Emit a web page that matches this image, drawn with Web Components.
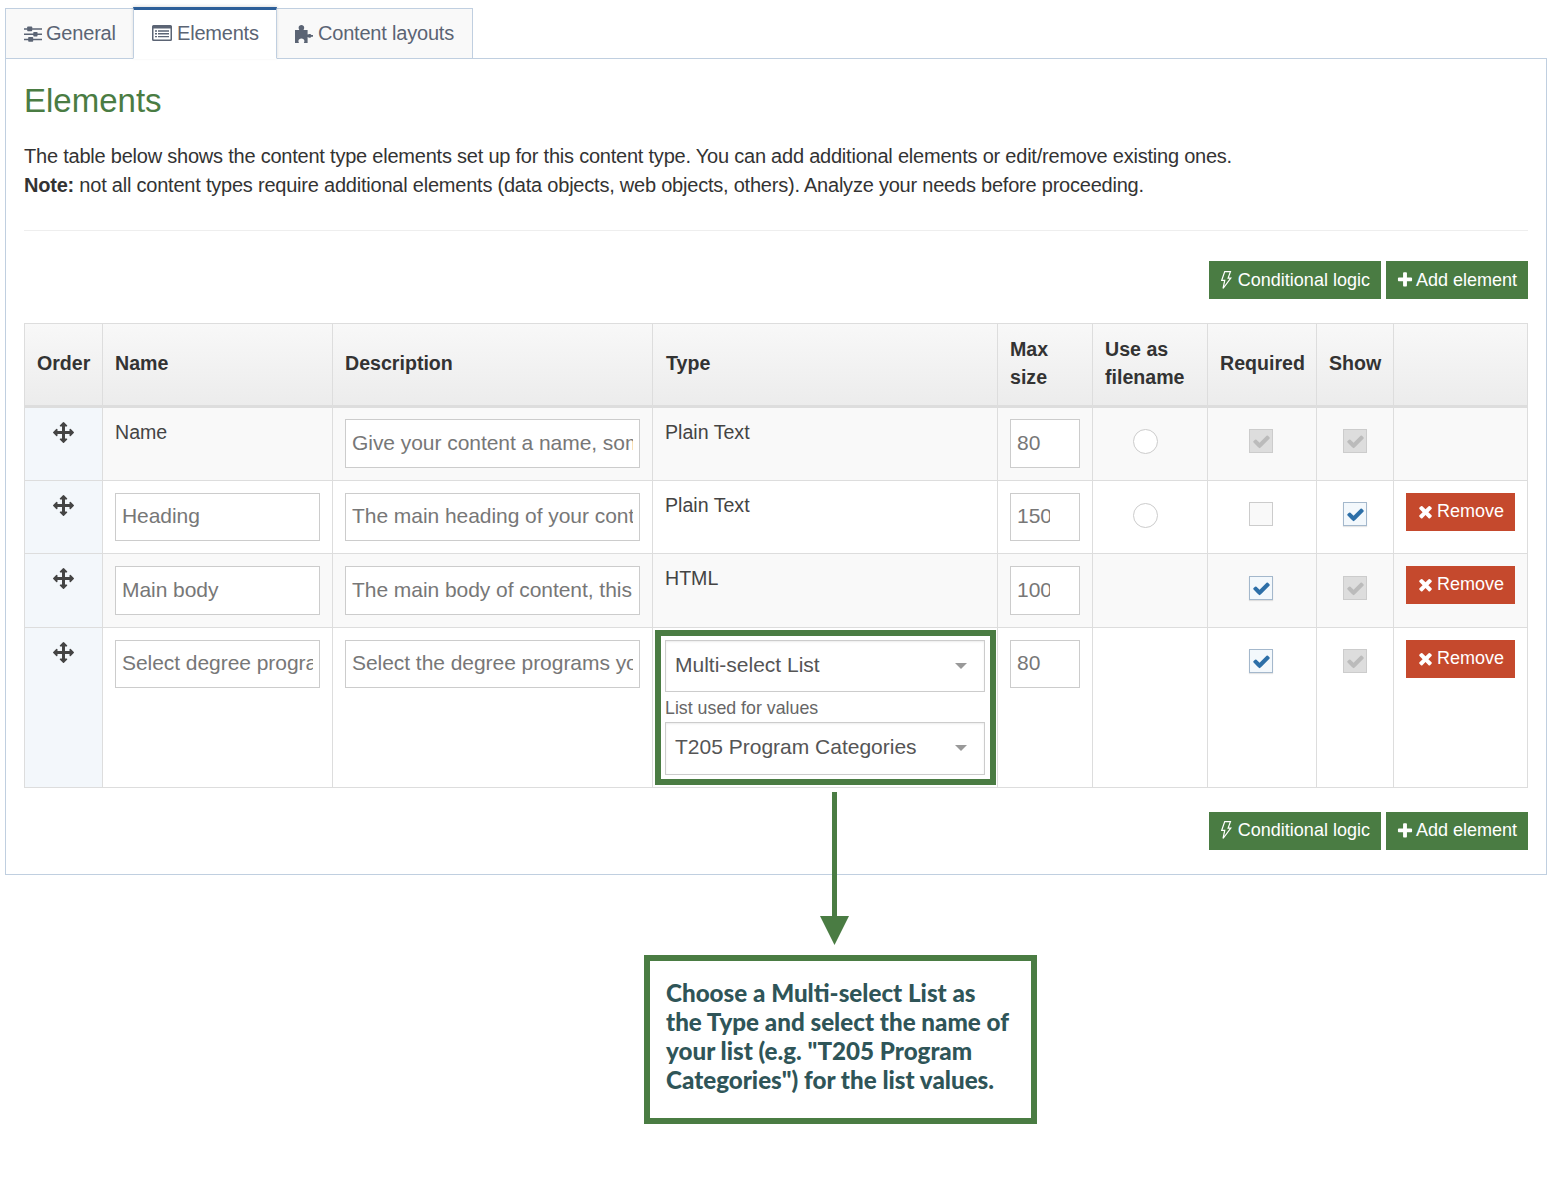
<!DOCTYPE html>
<html lang="en"><head><meta charset="utf-8"><title>Elements</title>
<style>
html,body{margin:0;background:#fff}
body{font-family:"Liberation Sans",Arial,sans-serif;color:#333;font-size:20px}
</style></head><body>
<page-shell>
  <tab-bar>
    <tab-item icon="sliders" w="129">General</tab-item>
    <tab-item icon="list" w="144" active>Elements</tab-item>
    <tab-item icon="puzzle" w="197">Content layouts</tab-item>
  </tab-bar>
  <content-panel heading="Elements">
    <p slot="intro">The table below shows the content type elements set up for this content type. You can add additional elements or edit/remove existing ones.<br><b>Note:</b> not all content types require additional elements (data objects, web objects, others). Analyze your needs before proceeding.</p>
    <action-bar first></action-bar>
    <element-table>
      <table-row head h="84">
        <table-cell>Order</table-cell><table-cell>Name</table-cell><table-cell>Description</table-cell><table-cell nudge>Type</table-cell>
        <table-cell>Max<br>size</table-cell><table-cell>Use as<br>filename</table-cell><table-cell>Required</table-cell><table-cell>Show</table-cell><table-cell></table-cell>
      </table-row>
      <table-row alt h="73">
        <table-cell drag><fa-icon name="move"></fa-icon></table-cell>
        <table-cell plain>Name</table-cell>
        <table-cell up><text-field w="295" h="49">Give your content a name, some</text-field></table-cell>
        <table-cell plain>Plain Text</table-cell>
        <table-cell up><text-field w="70" h="49" clip="39">80</text-field></table-cell>
        <table-cell center radio><radio-mark></radio-mark></table-cell>
        <table-cell center req><check-mark state="disabled"></check-mark></table-cell>
        <table-cell center><check-mark state="disabled"></check-mark></table-cell>
        <table-cell></table-cell>
      </table-row>
      <table-row h="73">
        <table-cell drag><fa-icon name="move"></fa-icon></table-cell>
        <table-cell><text-field w="205">Heading</text-field></table-cell>
        <table-cell><text-field w="295">The main heading of your cont</text-field></table-cell>
        <table-cell plain>Plain Text</table-cell>
        <table-cell><text-field w="70" clip="33">150</text-field></table-cell>
        <table-cell center radio low><radio-mark></radio-mark></table-cell>
        <table-cell center req><check-mark></check-mark></table-cell>
        <table-cell center><check-mark state="on"></check-mark></table-cell>
        <table-cell><remove-button></remove-button></table-cell>
      </table-row>
      <table-row alt h="74">
        <table-cell drag><fa-icon name="move"></fa-icon></table-cell>
        <table-cell><text-field w="205" h="49">Main body</text-field></table-cell>
        <table-cell><text-field w="295" h="49">The main body of content, this</text-field></table-cell>
        <table-cell plain>HTML</table-cell>
        <table-cell><text-field w="70" h="49" clip="33">100</text-field></table-cell>
        <table-cell></table-cell>
        <table-cell center req low><check-mark state="on"></check-mark></table-cell>
        <table-cell center low><check-mark state="disabled"></check-mark></table-cell>
        <table-cell><remove-button></remove-button></table-cell>
      </table-row>
      <table-row h="160">
        <table-cell drag><fa-icon name="move"></fa-icon></table-cell>
        <table-cell><text-field w="205">Select degree progra</text-field></table-cell>
        <table-cell><text-field w="295">Select the degree programs you</text-field></table-cell>
        <table-cell type>
          <select-box>Multi-select List</select-box>
          <field-label>List used for values</field-label>
          <select-box tall>T205 Program Categories</select-box>
          <highlight-frame></highlight-frame>
          <down-arrow></down-arrow>
        </table-cell>
        <table-cell><text-field w="70" clip="39">80</text-field></table-cell>
        <table-cell></table-cell>
        <table-cell center req><check-mark state="on"></check-mark></table-cell>
        <table-cell center><check-mark state="disabled"></check-mark></table-cell>
        <table-cell><remove-button></remove-button></table-cell>
      </table-row>
    </element-table>
    <action-bar slot="after"></action-bar>
  </content-panel>
  <call-out>Choose a Multi-select List as the Type and select the name of your list (e.g. "T205 Program Categories") for the list values.</call-out>
</page-shell>
<script>
const ICONS={
 move:'<svg viewBox="0 0 1792 1792" fill="currentColor"><path d="M1792 896q0 26-19 45l-256 256q-19 19-45 19t-45-19-19-45v-128h-384v384h128q26 0 45 19t19 45-19 45l-256 256q-19 19-45 19t-45-19l-256-256q-19-19-19-45t19-45 45-19h128v-384h-384v128q0 26-19 45t-45 19-45-19l-256-256q-19-19-19-45t19-45l256-256q19-19 45-19t45 19 19 45v128h384v-384h-128q-26 0-45-19t-19-45 19-45l256-256q19-19 45-19t45 19l256 256q19 19 19 45t-19 45-45 19h-128v384h384v-128q0-26 19-45t45-19 45 19l256 256q19 19 19 45z"/></svg>',
 check:'<svg viewBox="0 0 1792 1792" fill="currentColor"><path d="M1671 566q0 40-28 68l-724 724-136 136q-28 28-68 28t-68-28l-136-136-362-362q-28-28-28-68t28-68l136-136q28-28 68-28t68 28l294 295 656-657q28-28 68-28t68 28l136 136q28 28 28 68z"/></svg>',
 times:'<svg viewBox="0 0 1792 1792" fill="currentColor"><path d="M1490 1322q0 40-28 68l-136 136q-28 28-68 28t-68-28l-294-294-294 294q-28 28-68 28t-68-28l-136-136q-28-28-28-68t28-68l294-294-294-294q-28-28-28-68t28-68l136-136q28-28 68-28t68 28l294 294 294-294q28-28 68-28t68 28l136 136q28 28 28 68t-28 68l-294 294 294 294q28 28 28 68z"/></svg>',
 plus:'<svg viewBox="0 0 1792 1792" fill="currentColor"><path d="M1600 736v192q0 40-28 68t-68 28h-416v416q0 40-28 68t-68 28h-192q-40 0-68-28t-28-68v-416h-416q-40 0-68-28t-28-68v-192q0-40 28-68t68-28h416v-416q0-40 28-68t68-28h192q40 0 68 28t28 68v416h416q40 0 68 28t28 68z"/></svg>',
 bolt:'<svg viewBox="0 0 31 55" fill="none" stroke="currentColor" stroke-width="3.6" stroke-linejoin="miter"><path d="M11 2h17l-7 19h8L6 52l5-24H2z"/></svg>',
 sliders:'<svg viewBox="0 0 18 16" fill="currentColor"><path d="M0 2.300h18v1.400H0zM0 7.600h18v1.400H0zM0 12.800h18v1.400H0z"/><rect x="3.200" y="0.600" width="5" height="4.600" rx=".7"/><rect x="9.300" y="5.900" width="4.200" height="4.600" rx=".7"/><rect x="4.200" y="11.100" width="5" height="4.600" rx=".7"/></svg>',
 list:'<svg viewBox="0 0 20 16" fill="currentColor"><path fill-rule="evenodd" d="M1.500 0h17A1.500 1.500 0 0 1 20 1.500v13a1.500 1.500 0 0 1-1.500 1.500h-17A1.500 1.500 0 0 1 0 14.500v-13A1.500 1.500 0 0 1 1.500 0zM1.500 3.600v10.600q0 .4.4.4h16.200q.4 0 .4-.4V3.600z"/><path d="M3 5.300h2v1.400H3zM6 5.300h11v1.400H6zM3 8.100h2v1.400H3zM6 8.100h11v1.400H6zM3 10.900h2v1.400H3zM6 10.900h11v1.400H6z"/></svg>',
 puzzle:'<svg viewBox="0 0 18 18" fill="currentColor"><path d="M0 5h4.300C3.800 4.100 3.600 3.400 3.600 2.700 3.600 1 5 0 6.400 0s2.800 1 2.800 2.700c0 .7-.2 1.400-.7 2.300h4.100v4.600c.7-.5 1.200-.7 1.900-.7 1 0 1.600.5 1.900 1h1.600v1.800h-1.600c-.3.500-.9 1-1.900 1-.7 0-1.200-.2-1.900-.7V18H8.800c.4-.8.6-1.400.6-2 0-1.500-1.300-2.500-3-2.500s-3 1-3 2.500c0 .6.2 1.200.6 2H0z"/></svg>'
};
const GREEN='#4a7c43';
function def(name,css,html,extra){
  customElements.define(name,class extends HTMLElement{
    constructor(){super();this.attachShadow({mode:'open'});}
    connectedCallback(){
      const h=typeof html==='function'?html(this):html;
      this.shadowRoot.innerHTML='<style>'+css+'</style>'+h;
      if(extra)extra(this);
    }
  });
}
def('fa-icon',':host{display:flex;line-height:0;flex:none}svg{width:var(--icon-w,22px);height:var(--icon-h,22px);display:block}',
  el=>ICONS[el.getAttribute('name')]);
def('page-shell',':host{display:block;height:1200px;box-sizing:border-box;padding:7px 5px 0;position:relative}','<slot></slot>');
def('tab-bar',':host{display:flex;align-items:flex-end;height:52px;position:relative;z-index:1;margin-bottom:-1px}','<slot></slot>');
def('tab-item',`:host{display:flex;align-items:center;box-sizing:border-box;height:51px;padding:0 0 0 18px;gap:4px;color:#5b6474;font-size:20px;letter-spacing:-.2px;background:#f9f9f9;border:1px solid #c0cfe0;margin-left:-1px}
:host(:first-child){margin-left:0}
:host([active]){background:#fff;border-top:3px solid #2d5f99;border-bottom-color:#fff;height:52px;padding-bottom:2px;gap:5px;box-shadow:0 -1px 3px rgba(0,0,0,.12);position:relative;z-index:1}
:host([icon=sliders]) fa-icon{--icon-w:18px;--icon-h:16px;margin-top:1px}
:host([icon=list]) fa-icon{--icon-w:20px;--icon-h:16px}
:host([icon=puzzle]){gap:5px}
:host([icon=puzzle]) fa-icon{--icon-w:18px;--icon-h:18px}`,
  el=>{el.style.width=el.getAttribute('w')+'px';return `<fa-icon name="${el.getAttribute('icon')}"></fa-icon><slot></slot>`;});
def('content-panel',`:host{display:block;box-sizing:border-box;height:817px;border:1px solid #c0cfe0;padding:0 18px;background:#fff}
h1{margin:0;font:400 33px/38px "Liberation Sans",Arial,sans-serif;color:${GREEN};padding-top:23px}
.intro{margin-top:22px;font-size:20px;line-height:29px;letter-spacing:-.22px;color:#333;padding-bottom:30px;border-bottom:1px solid #eee}
::slotted(p){margin:0}
.tools{margin-top:30px}.after{margin-top:24px}`,
  el=>`<h1>${el.getAttribute('heading')}</h1><div class="intro"><slot name="intro"></slot></div><div class="tools" id="t"></div><slot></slot><div class="after"><slot name="after"></slot></div>`,
  el=>{const first=el.querySelector('action-bar:not([slot])');el.shadowRoot.getElementById('t').appendChild(first);});
def('action-bar',`:host{display:flex;justify-content:flex-end;gap:5px}
a{display:flex;align-items:center;height:38px;box-sizing:border-box;padding:0 11px 1px;background:${GREEN};color:#fff;font-size:18px}
:host([first]) a{padding-bottom:0}
.c{padding-left:12px;gap:6px}.p{gap:2px}
.c fa-icon{--icon-w:10.500px;--icon-h:18.500px}.p fa-icon{--icon-w:18px;--icon-h:18px;margin-left:-1px}`,
  `<a class="c"><fa-icon name="bolt"></fa-icon>Conditional logic</a><a class="p"><fa-icon name="plus"></fa-icon>Add element</a>`);
def('element-table',':host{display:block;margin-top:24px;border-top:1px solid #ddd;border-left:1px solid #ddd;border-right:1px solid #ddd;box-sizing:border-box;width:1504px}','<slot></slot>');
def('table-row',`:host{display:grid;grid-template-columns:78px 230px 320px 345px 95px 115px 109px 77px 134px;box-sizing:border-box;border-bottom:1px solid #ddd;background:#fff;font-size:19.600px}
:host([alt]){background:#f9f9f9}
:host([head]){background:linear-gradient(#f8f8f8,#ececec);border-bottom:3px solid #ddd;font-weight:700}`,
  el=>{el.style.height=el.getAttribute('h')+'px';return '<slot></slot>';});
def('table-cell',`:host{display:block;box-sizing:border-box;padding:12px;border-right:1px solid #ddd;color:#333;line-height:28px;min-width:0;position:relative}
:host(:last-child){border-right:0}
:host-context(table-row[head]){display:flex;flex-direction:column;justify-content:center;align-items:flex-start;padding-top:0;padding-bottom:4px}
:host([nudge]){padding-left:13px}
:host([up]){padding-top:11px}
:host([plain]){padding-top:11px;line-height:26px;color:#444}
:host([drag]){display:flex;justify-content:center;background:#f3f7fb;padding:14px 0 0 0;color:#444;--icon-w:21px;--icon-h:21px}
:host([center]){display:flex;justify-content:center;padding-top:21px}
:host([radio]){padding-right:22px}
:host([req]){padding-left:11px;padding-right:13px}
:host([low]){padding-top:22px}
:host([type]){padding:12px 12px 0}`,'<slot></slot>');
def('text-field',`:host{display:flex;box-sizing:border-box;height:48px;border:1px solid #ccc;background:#fff;padding:0 6px 2px;align-items:center;color:#777;font-size:21px;font-weight:400;letter-spacing:-.05px}
span{display:block;overflow:hidden;white-space:nowrap;width:100%}`,
  el=>{el.style.width=el.getAttribute('w')+'px';if(el.hasAttribute('h'))el.style.height=el.getAttribute('h')+'px';const c=el.getAttribute('clip');return `<span${c?` style="width:${c}px"`:''}><slot></slot></span>`;});
def('check-mark',`:host{display:flex;align-items:center;justify-content:center;box-sizing:border-box;width:24px;height:24px;border:1px solid #ccc;background:#f9f9f9;color:#2d6fa8}
:host([state=on]){border-color:#a4b8cc;background:#f3f8fc;box-shadow:0 1px 1px rgba(0,0,0,.1)}
:host([state=disabled]){background:#ddd;border-color:#ccc;color:#bbb}
fa-icon{--icon-w:19px;--icon-h:19px}`,
  el=>el.getAttribute('state')?'<fa-icon name="check"></fa-icon>':'');
def('radio-mark',':host{display:block;box-sizing:border-box;width:25px;height:25px;border:1px solid #ccc;border-radius:50%;background:#fff}','');
def('remove-button',`:host{display:flex;align-items:center;justify-content:flex-start;gap:2px;height:38px;width:109px;background:#c5492d;color:#fff;font-size:18px;font-weight:400;box-sizing:border-box;padding:0 0 2px 10px;--icon-w:19px;--icon-h:19px}`,
  '<fa-icon name="times"></fa-icon>Remove');
def('select-box',`:host{display:flex;align-items:center;justify-content:space-between;box-sizing:border-box;height:52px;width:320px;border:1px solid #ccc;padding:0 17px 2px 9px;font-size:21px;font-weight:400;color:#555;background:#fff;box-shadow:inset 0 1px 2px rgba(0,0,0,.08)}
:host([tall]){height:53px;padding-bottom:4px}
i{width:0;height:0;border-left:6px solid transparent;border-right:6px solid transparent;border-top:6px solid #999;margin-top:2px}`,
  '<span><slot></slot></span><i></i>');
def('field-label',':host{display:block;font-size:17.800px;line-height:32px;height:30px;color:#666;font-weight:400}','<slot></slot>');
def('highlight-frame',`:host{position:absolute;left:2px;top:2px;width:341px;height:155px;box-sizing:border-box;border:6px solid ${GREEN};pointer-events:none}`,'');
def('down-arrow',`:host{position:absolute;left:167px;top:164px;width:29px;height:153px;z-index:3}svg{display:block}`,
  `<svg width="29" height="153" viewBox="0 0 29 153"><path d="M12 0h5v124h12L14.500 153 0 124h12z" fill="${GREEN}"/></svg>`);
def('call-out',`:host{display:block;box-sizing:border-box;width:393px;height:169px;margin:80px 0 0 639px;border:6px solid ${GREEN};padding:17px 20px 17px 16px;font:900 24.200px/29px Lato,sans-serif;color:#2f5558}`,'<slot></slot>');
</script>
</body></html>
